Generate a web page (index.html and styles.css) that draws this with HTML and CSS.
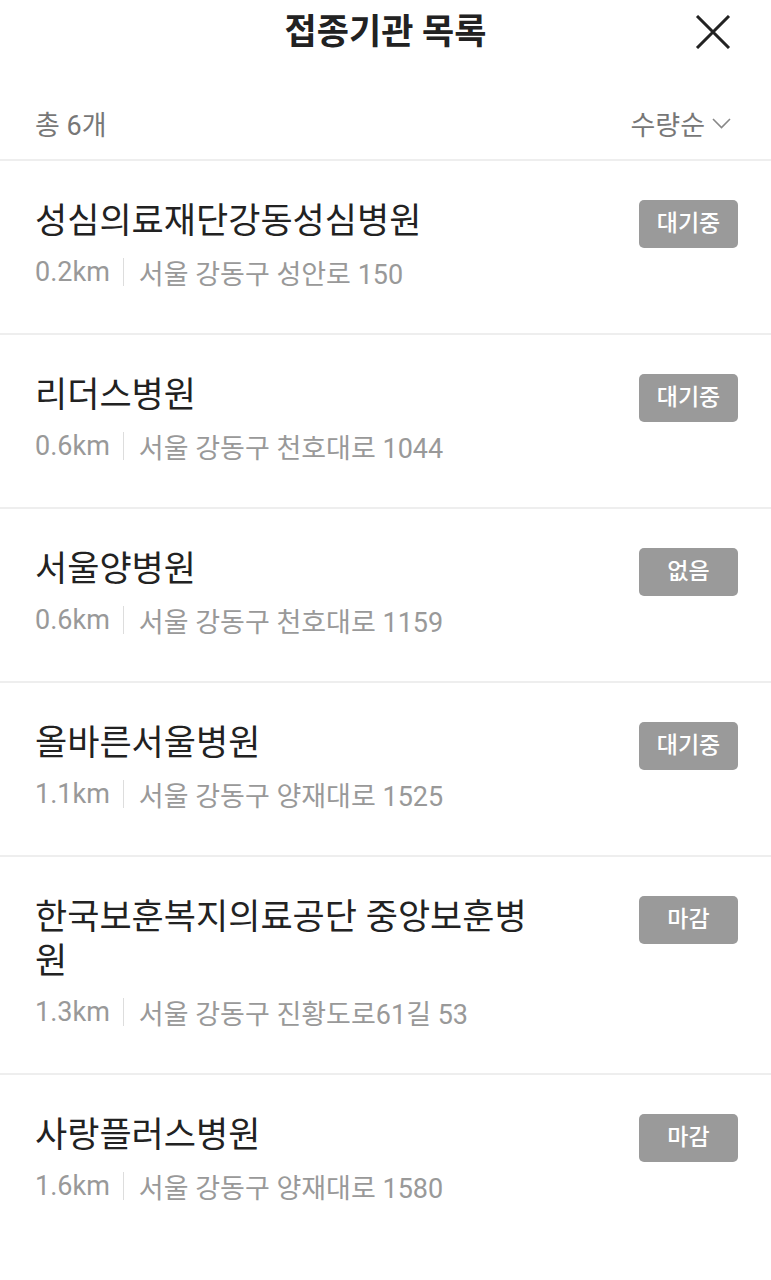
FILE: index.html
```html
<!DOCTYPE html>
<html>
<head>
  <meta charset="utf-8">
  <title>접종기관 목록</title>
  <link rel="stylesheet" href="styles.css">
</head>
<body>
  <header class="top-bar">
    <h1 class="title">접종기관 목록</h1>
    <button class="close-btn" aria-label="닫기">
      <svg width="36" height="34" viewBox="0 0 36 34">
        <path d="M2 1 L34 33 M34 1 L2 33" stroke="#222" stroke-width="3" fill="none"/>
      </svg>
    </button>
  </header>
  <div class="toolbar">
    <span class="count">총 6개</span>
    <span class="sort">수량순
      <svg width="19" height="11" viewBox="0 0 19 11">
        <path d="M1 1 L9.5 9.5 L18 1" stroke="#888" stroke-width="1.6" fill="none"/>
      </svg>
    </span>
  </div>
  <ul id="clinic-list" class="clinic-list"></ul>
  <script>
    var clinics = [
      { name: '성심의료재단강동성심병원', dist: '0.2km', addr: '서울 강동구 성안로 150', status: '대기중' },
      { name: '리더스병원', dist: '0.6km', addr: '서울 강동구 천호대로 1044', status: '대기중' },
      { name: '서울양병원', dist: '0.6km', addr: '서울 강동구 천호대로 1159', status: '없음' },
      { name: '올바른서울병원', dist: '1.1km', addr: '서울 강동구 양재대로 1525', status: '대기중' },
      { name: '한국보훈복지의료공단 중앙보훈병원', dist: '1.3km', addr: '서울 강동구 진황도로61길 53', status: '마감' },
      { name: '사랑플러스병원', dist: '1.6km', addr: '서울 강동구 양재대로 1580', status: '마감' }
    ];
    var list = document.getElementById('clinic-list');
    clinics.forEach(function(c) {
      var li = document.createElement('li');
      li.className = 'clinic';
      li.innerHTML =
        '<div class="info">' +
          '<div class="name">' + c.name + '</div>' +
          '<div class="meta"><span class="dist">' + c.dist + '</span>' +
          '<span class="sep"></span><span class="addr">' + c.addr + '</span></div>' +
        '</div>' +
        '<span class="badge">' + c.status + '</span>';
      list.appendChild(li);
    });
  </script>
</body>
</html>
```

FILE: styles.css
```css
body {
  margin: 0;
  background: #fff;
  font-family: Roboto, "Noto Sans CJK KR", sans-serif;
  color: #222;
}
.top-bar {
  height: 66px;
  display: flex;
  align-items: center;
  justify-content: center;
  position: relative;
}
.title {
  margin: 0;
  font-size: 35px;
  font-weight: bold;
  line-height: 66px;
}
.close-btn {
  position: absolute;
  right: 40px;
  top: 15px;
  padding: 0;
  border: none;
  background: none;
  line-height: 0;
}
.toolbar {
  display: flex;
  justify-content: space-between;
  align-items: center;
  padding: 40px 40px 19px 35px;
  height: 34px;
  border-bottom: 2px solid #eee;
  font-size: 27px;
  color: #777;
}
.sort {
  display: flex;
  align-items: center;
  gap: 7px;
}
.clinic-list {
  list-style: none;
  margin: 0;
  padding: 0;
}
.clinic {
  display: flex;
  align-items: flex-start;
  gap: 90px;
  padding: 39px 33px 43px 35px;
  border-bottom: 2px solid #eee;
}
.clinic:last-child {
  border-bottom: none;
}
.info {
  flex: 1;
}
.name {
  font-size: 35px;
  line-height: 44px;
  color: #222;
}
.meta {
  display: flex;
  align-items: center;
  margin-top: 10px;
  height: 36px;
  font-size: 27px;
  color: #999;
}
.sep {
  width: 1px;
  height: 28px;
  background: #ddd;
  margin: 0 15px 0 13px;
}
.badge {
  width: 99px;
  height: 48px;
  line-height: 48px;
  border-radius: 5px;
  background: #9a9a9a;
  color: #fff;
  font-size: 23px;
  font-weight: 500;
  text-align: center;
}
```
